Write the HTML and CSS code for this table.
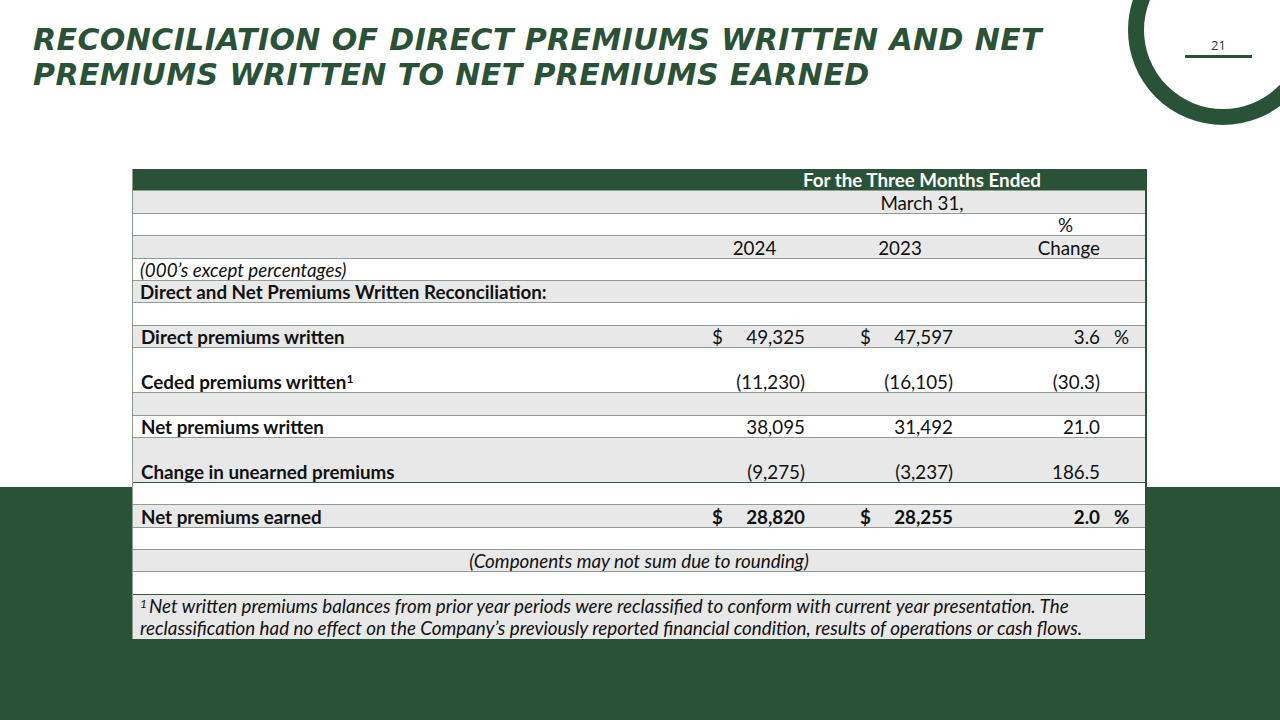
FILE: index.html
```html
<!DOCTYPE html>
<html lang="en">
<head>
<meta charset="utf-8">
<title>Reconciliation of Direct Premiums Written</title>
<link rel="stylesheet" href="styles.css">
</head>
<body>
<div class="slide">
  <div class="ring"></div>
  <div class="pagenum">21</div>
  <h1 class="title">RECONCILIATION OF DIRECT PREMIUMS WRITTEN AND NET<br>PREMIUMS WRITTEN TO NET PREMIUMS EARNED</h1>

  <div class="table">
    <div class="row head">
      <div class="c-label"></div>
      <div class="c-span6 bold">For the Three Months Ended</div>
    </div>
    <div class="row gray">
      <div class="c-label"></div>
      <div class="c-span6">March 31,</div>
    </div>
    <div class="row">
      <div class="c-label"></div>
      <div class="c-span4"></div>
      <div class="c-pct pct-head">%</div>
      <div class="c-sign"></div>
    </div>
    <div class="row gray">
      <div class="c-label"></div>
      <div class="c-span2 y1">2024</div>
      <div class="c-span2 y2">2023</div>
      <div class="c-pct">Change</div>
      <div class="c-sign"></div>
    </div>
    <div class="row">
      <div class="c-full italic">(000’s except percentages)</div>
    </div>
    <div class="row gray">
      <div class="c-full bold">Direct and Net Premiums Written Reconciliation:</div>
    </div>
    <div class="row"></div>
    <div class="row gray">
      <div class="c-label bold">Direct premiums written</div>
      <div class="c-d1">$</div><div class="c-val">49,325</div>
      <div class="c-d2">$</div><div class="c-val">47,597</div>
      <div class="c-pct">3.6</div><div class="c-sign">%</div>
    </div>
    <div class="row tall">
      <div class="c-label bold">Ceded premiums written<sup>1</sup></div>
      <div class="c-d1"></div><div class="c-val">(11,230)</div>
      <div class="c-d2"></div><div class="c-val">(16,105)</div>
      <div class="c-pct">(30.3)</div><div class="c-sign"></div>
    </div>
    <div class="row gray"></div>
    <div class="row">
      <div class="c-label bold">Net premiums written</div>
      <div class="c-d1"></div><div class="c-val">38,095</div>
      <div class="c-d2"></div><div class="c-val">31,492</div>
      <div class="c-pct">21.0</div><div class="c-sign"></div>
    </div>
    <div class="row gray tall dark">
      <div class="c-label bold">Change in unearned premiums</div>
      <div class="c-d1"></div><div class="c-val">(9,275)</div>
      <div class="c-d2"></div><div class="c-val">(3,237)</div>
      <div class="c-pct">186.5</div><div class="c-sign"></div>
    </div>
    <div class="row"></div>
    <div class="row gray bold">
      <div class="c-label">Net premiums earned</div>
      <div class="c-d1">$</div><div class="c-val">28,820</div>
      <div class="c-d2">$</div><div class="c-val">28,255</div>
      <div class="c-pct">2.0</div><div class="c-sign">%</div>
    </div>
    <div class="row"></div>
    <div class="row gray">
      <div class="c-full italic center">(Components may not sum due to rounding)</div>
    </div>
    <div class="row dark"></div>
    <div class="row gray note">
      <div class="c-full italic"><sup>1</sup>Net written premiums balances from prior year periods were reclassified to conform with current year presentation. The reclassification had no effect on the Company’s previously reported financial condition, results of operations or cash flows.</div>
    </div>
  </div>
</div>
</body>
</html>
```

FILE: styles.css
```css
html, body {
  margin: 0;
  padding: 0;
  background: #ffffff;
}

.slide {
  position: relative;
  width: 1280px;
  height: 720px;
  overflow: hidden;
  background: linear-gradient(to bottom, #ffffff 0, #ffffff 487px, #2a5236 487px, #2a5236 100%);
  padding-top: 22px;
  box-sizing: border-box;
}

.title {
  margin: 0 0 0 33px;
  font-family: "DejaVu Sans", "Open Sans", sans-serif;
  font-weight: 700;
  font-style: italic;
  font-size: 30px;
  line-height: 35px;
  letter-spacing: 0.4px;
  color: #2a5236;
}

.ring {
  position: absolute;
  left: 1128px;
  top: -65px;
  width: 190px;
  height: 190px;
  border: 16px solid #2a5236;
  border-radius: 50%;
  box-sizing: border-box;
}

.pagenum {
  position: absolute;
  left: 1185px;
  top: 36px;
  width: 67px;
  text-align: center;
  font-family: "Open Sans", sans-serif;
  font-size: 13px;
  line-height: 18px;
  color: #333333;
  border-bottom: 3px solid #2a5236;
  padding-bottom: 1px;
}

.table {
  margin: 77px 0 0 132px;
  width: 1015px;
  font-family: Lato, "Liberation Sans", sans-serif;
  font-size: 18.8px;
  color: #111111;
  border-left: 1px solid #8f9c91;
  border-right: 2px solid #2a5236;
  box-sizing: border-box;
}

.row {
  display: grid;
  grid-template-columns: 572px 30px 75px 73px 75px 147px 40px;
  height: 22.4px;
  box-sizing: border-box;
  border-bottom: 1.5px solid #8f9c91;
  background: #ffffff;
  align-items: end;
  line-height: 20px;
}

.row > div {
  white-space: nowrap;
  padding-bottom: 0;
}

.row.gray { background: #e8e8e8; }
.row.tall { height: 45px; }
.row.dark { border-bottom-color: #2f5a3c; }

.row.head {
  background: #2a5236;
  color: #ffffff;
  border-bottom-color: #8f9c91;
}

.bold { font-weight: 700; }
.italic { font-style: italic; }
.center { text-align: center; }

.c-label { padding-left: 8px; }
.c-full { grid-column: 1 / -1; padding-left: 7px; }
.c-full.center { padding-left: 0; }
.c-span6 { grid-column: 2 / 8; text-align: center; padding-right: 6px; }
.c-span4 { grid-column: 2 / 6; }
.c-span2 { grid-column: span 2; text-align: center; }
.y1 { padding-right: 6px; }
.y2 { padding-left: 32px; }

.c-d1 { padding-left: 7px; }
.c-d2 { padding-left: 50px; }
.c-val { text-align: right; padding-right: 5px; }
.c-pct { text-align: right; padding-right: 5px; }
.pct-head { padding-right: 32px; }
.c-sign { padding-left: 9px; }

sup {
  font-size: 12px;
  line-height: 0;
  vertical-align: 6px;
}

.row.note {
  height: 44px;
  border-bottom: none;
  line-height: 22px;
}

.row.note .c-full {
  white-space: normal;
  padding-right: 50px;
  padding-bottom: 0;
}

.row.note sup {
  font-size: 12px;
  vertical-align: 5px;
  margin-right: 2px;
}
```
